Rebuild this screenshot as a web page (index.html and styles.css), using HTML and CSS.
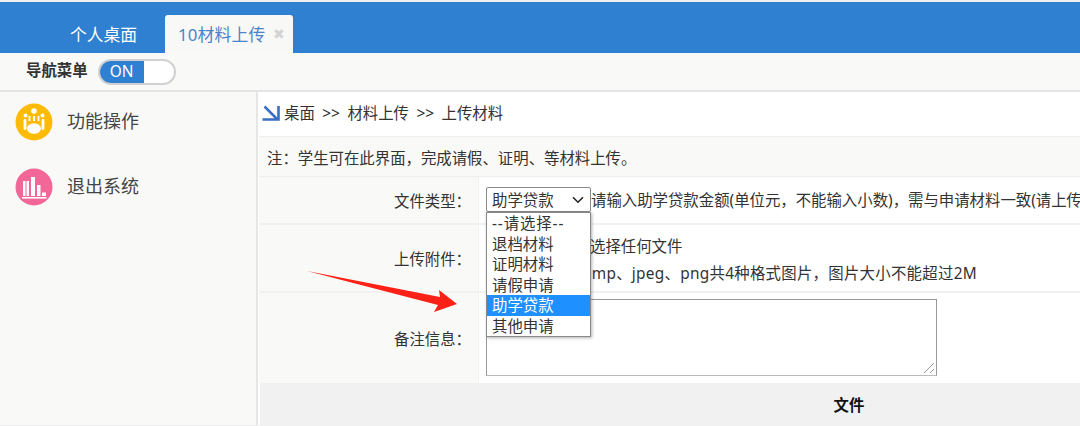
FILE: index.html
```html
<!DOCTYPE html>
<html lang="zh-CN">
<head>
<meta charset="utf-8">
<title>材料上传</title>
<link rel="stylesheet" href="styles.css">
</head>
<body>
<div class="page">
  <header class="topbar">
    <div class="tab">个人桌面</div>
    <div class="tab active"><span class="tab-title">10材料上传</span><span class="close">✖</span></div>
  </header>
  <div class="toolbar">
    <span class="nav-label">导航菜单</span>
    <span class="switch"><span class="on">ON</span></span>
  </div>
  <div class="main">
    <aside class="sidebar">
      <div class="menu-item">
        <svg class="menu-icon" viewBox="0 0 38 38"><circle cx="19" cy="19" r="18.5" fill="#fdbb05"/><g fill="#fff"><circle cx="19" cy="8" r="2.8"/><circle cx="10.5" cy="12.5" r="2"/><circle cx="27.5" cy="12.5" r="2"/><ellipse cx="19" cy="25.5" rx="7" ry="5.2"/><rect x="8.6" y="16" width="2.8" height="11" rx="1.4"/><rect x="26.6" y="16" width="2.8" height="11" rx="1.4"/><rect x="13.6" y="13" width="1.8" height="5"/><rect x="18" y="13" width="2" height="5"/><rect x="22.6" y="13" width="1.8" height="5"/></g></svg>
        <span class="menu-text">功能操作</span>
      </div>
      <div class="menu-item">
        <svg class="menu-icon" viewBox="0 0 38 38"><circle cx="19" cy="19" r="18.5" fill="#f26698"/><g fill="#fff"><rect x="8" y="13" width="2.5" height="15"/><rect x="11.5" y="13" width="2.5" height="15"/><rect x="16" y="9" width="4" height="19"/><rect x="22" y="17" width="3.5" height="11"/><rect x="27" y="24.5" width="4" height="3.5"/><rect x="7" y="29" width="24.5" height="1.6"/></g></svg>
        <span class="menu-text">退出系统</span>
      </div>
    </aside>
    <section class="content">
      <div class="crumb">
        <svg class="crumb-icon" viewBox="0 0 18 18"><path d="M2.5 2.5 L15 15 M0.5 15.5 H16.5 V2" fill="none" stroke="#3a6fc4" stroke-width="2.6"/></svg>
        <span>桌面 &gt;&gt; 材料上传 &gt;&gt; 上传材料</span>
      </div>
      <div class="note">注：学生可在此界面，完成请假、证明、等材料上传。</div>
      <div class="row row-type">
        <div class="label">文件类型：</div>
        <div class="value type-value">
          <span class="select">助学贷款<svg class="chev" viewBox="0 0 12 8"><path d="M1 1.2 L6 6.2 L11 1.2" fill="none" stroke="#222" stroke-width="1.6"/></svg></span>
          <span class="hint">请输入助学贷款金额(单位元，不能输入小数)，需与申请材料一致(请上传</span>
        </div>
      </div>
      <div class="row row-file">
        <div class="label">上传附件：</div>
        <div class="value file-value">
          <div class="file-line first">选择任何文件</div>
          <div class="file-line formats">bmp、jpeg、png共4种格式图片，图片大小不能超过2M</div>
        </div>
      </div>
      <div class="row row-remark">
        <div class="label">备注信息：</div>
        <div class="value remark-value"><div class="textarea"><svg class="grip" viewBox="0 0 12 12"><path d="M1 11 L11 1 M7 11 L11 7" stroke="#999" stroke-width="1"/></svg></div></div>
      </div>
      <div class="table-head">文件</div>
    </section>
  </div>
  <ul class="dropdown">
    <li class="placeholder">--请选择--</li>
    <li>退档材料</li>
    <li>证明材料</li>
    <li>请假申请</li>
    <li class="selected">助学贷款</li>
    <li>其他申请</li>
  </ul>
  <svg class="arrow" viewBox="0 0 152 44"><path d="M1 1 L134 27 L133 20 L151 34 L128 42 L132 35 Z" fill="#fc2117"/></svg>
</div>
</body>
</html>
```
FILE: styles.css
```css
* { box-sizing: border-box; }
html, body { margin: 0; padding: 0; }
body {
  width: 1080px;
  height: 426px;
  overflow: hidden;
  background: #fff;
  font-family: "Noto Sans", "Noto Sans CJK SC", sans-serif;
  font-size: 15.4px;
  color: #333;
}
.page {
  position: relative;
  width: 1080px;
  height: 426px;
  overflow: hidden;
  padding-top: 2px;
  background: #eee;
}
.topbar {
  height: 51px;
  background: #2f80d1;
  display: flex;
  align-items: flex-end;
  padding-left: 56px;
}
.tab {
  height: 38px;
  line-height: 39px;
  padding: 0 14px;
  margin-right: 14px;
  color: #fff;
  font-size: 16.8px;
  width: 95px;
  white-space: nowrap;
}
.tab.active {
  width: 128px;
  margin-right: 0;
  background: #f8f8f6;
  color: #4a84c9;
  border-radius: 3px 3px 0 0;
  display: flex;
  gap: 7px;
  padding: 0 0 0 13px;
}
.tab-title { letter-spacing: .2px; }
.close { color: #d4d4d4; font-size: 14px; line-height: 37px; }
.toolbar {
  height: 39px;
  background: #f9f9f7;
  border-bottom: 2px solid #e4e4e4;
  display: flex;
  align-items: center;
  padding-left: 26px;
  gap: 10px;
}
.nav-label { font-size: 15.4px; font-weight: 700; color: #333; line-height: 36px; padding-bottom: 2px; }
.switch {
  width: 78px;
  height: 26px;
  border: 2px solid #d0d0d0;
  border-radius: 13px;
  background: #fff;
  overflow: hidden;
  display: block;
}
.on {
  display: block;
  width: 44px;
  height: 100%;
  background: #2f80d1;
  color: #fff;
  font-size: 15.4px;
  line-height: 22px;
  text-align: center;
}
.main { display: flex; height: 333px; }
.sidebar {
  width: 258px;
  flex: none;
  background: #f9f9f7;
  border-right: 2px solid #e6e6e6;
  padding: 11px 0 0 15px;
  display: flex;
  flex-direction: column;
  gap: 27px;
}
.menu-item { display: flex; align-items: center; gap: 14px; height: 38px; font-size: 18px; color: #444; }
.menu-text { padding-bottom: 5px; }
.menu-icon { width: 38px; height: 38px; flex: none; }
.content { flex: 1; min-width: 0; background: #fff; padding-left: 1px; }
.crumb {
  height: 44px;
  padding: 0 0 3px 3px;
  display: flex;
  align-items: center;
  gap: 4px;
  color: #333;
  white-space: nowrap;
  word-spacing: 3.5px;
}
.crumb-icon { width: 18px; height: 18px; }
.note {
  height: 41px;
  line-height: 35px;
  padding: 4px 0 0 8px;
  background: #f9f9f7;
  border-top: 1px solid #eee;
  border-bottom: 1px solid #eee;
  color: #333;
  white-space: nowrap;
}
.row { display: flex; border-bottom: 2px solid #f1f1f1; }
.row-type { height: 48px; }
.row-file { height: 68px; }
.row-remark { height: 90px; border-bottom: 0; }
.label {
  width: 220px;
  flex: none;
  background: #f9f9f7;
  border-right: 1px solid #f1f1f1;
  display: flex;
  align-items: center;
  justify-content: flex-end;
  padding-right: 7px;
  color: #333;
}
.value { flex: 1; min-width: 0; white-space: nowrap; overflow: hidden; color: #333; }
.type-value { display: flex; align-items: flex-start; padding: 10px 0 0 7px; }
.select {
  width: 105px;
  height: 25px;
  flex: none;
  border: 1px solid #8a8a8a;
  border-radius: 2px;
  background: #fff;
  padding-left: 5px;
  line-height: 25px;
  position: relative;
  display: block;
}
.chev { position: absolute; right: 6px; top: 8px; width: 12px; height: 8px; }
.hint { line-height: 28px; }
.file-value { padding: 8px 0 0 103px; }
.file-line { height: 27px; line-height: 27px; }
.first { padding-left: 8px; }
.formats { letter-spacing: .28px; }
.remark-value { padding: 6px 0 0 7px; }
.textarea {
  width: 451px;
  height: 77px;
  border: 1px solid #999;
  border-bottom-color: #bbb;
  background: #fff;
  position: relative;
}
.grip { position: absolute; right: 1px; bottom: 1px; width: 12px; height: 12px; }
.table-head {
  height: 43px;
  margin-left: 1px;
  background: #f1f1f1;
  text-align: center;
  line-height: 46px;
  font-weight: 700;
  color: #111;
  padding-left: 358px;
}
.dropdown {
  position: absolute;
  left: 486px;
  top: 212px;
  width: 105px;
  height: 125px;
  margin: 0;
  padding: 0;
  list-style: none;
  background: #fff;
  border: 1px solid #8a8a8a;
  box-shadow: 1px 1px 3px rgba(0,0,0,.3);
  color: #333;
}
.dropdown li { height: 20.6px; line-height: 22px; padding-left: 5px; white-space: nowrap; }
.dropdown li.placeholder { letter-spacing: .9px; }
.dropdown li.selected { background: #1e90ff; color: #fff; }
.arrow { position: absolute; left: 306px; top: 270px; width: 152px; height: 44px; }
```
